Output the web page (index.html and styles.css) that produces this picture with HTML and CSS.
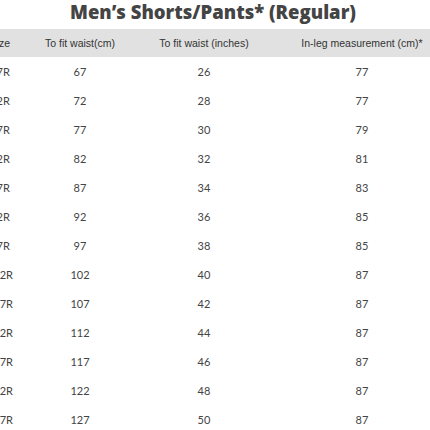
FILE: index.html
```html
<!DOCTYPE html>
<html>
<head>
<meta charset="utf-8">
<link rel="stylesheet" href="styles.css">
</head>
<body>
<div class="page">
  <h1 class="title">Men’s Shorts/Pants* (Regular)</h1>
  <div class="table">
    <div class="row head">
      <div class="cell">Size</div>
      <div class="cell">To fit waist(cm)</div>
      <div class="cell">To fit waist (inches)</div>
      <div class="cell">In-leg measurement (cm)*</div>
    </div>
    <div class="row"><div class="cell">67R</div><div class="cell">67</div><div class="cell">26</div><div class="cell">77</div></div>
    <div class="row"><div class="cell">72R</div><div class="cell">72</div><div class="cell">28</div><div class="cell">77</div></div>
    <div class="row"><div class="cell">77R</div><div class="cell">77</div><div class="cell">30</div><div class="cell">79</div></div>
    <div class="row"><div class="cell">82R</div><div class="cell">82</div><div class="cell">32</div><div class="cell">81</div></div>
    <div class="row"><div class="cell">87R</div><div class="cell">87</div><div class="cell">34</div><div class="cell">83</div></div>
    <div class="row"><div class="cell">92R</div><div class="cell">92</div><div class="cell">36</div><div class="cell">85</div></div>
    <div class="row"><div class="cell">97R</div><div class="cell">97</div><div class="cell">38</div><div class="cell">85</div></div>
    <div class="row"><div class="cell">102R</div><div class="cell">102</div><div class="cell">40</div><div class="cell">87</div></div>
    <div class="row"><div class="cell">107R</div><div class="cell">107</div><div class="cell">42</div><div class="cell">87</div></div>
    <div class="row"><div class="cell">112R</div><div class="cell">112</div><div class="cell">44</div><div class="cell">87</div></div>
    <div class="row"><div class="cell">117R</div><div class="cell">117</div><div class="cell">46</div><div class="cell">87</div></div>
    <div class="row"><div class="cell">122R</div><div class="cell">122</div><div class="cell">48</div><div class="cell">87</div></div>
    <div class="row"><div class="cell">127R</div><div class="cell">127</div><div class="cell">50</div><div class="cell">87</div></div>
  </div>
</div>
</body>
</html>
```
FILE: styles.css
```css
html, body {
  margin: 0;
  padding: 0;
  background: #fff;
  overflow: hidden;
}
.page {
  width: 430px;
  height: 430px;
  overflow: hidden;
}
.title {
  margin: 0;
  height: 29px;
  line-height: 23px;
  text-align: center;
  font-family: "Open Sans", sans-serif;
  font-weight: 800;
  font-size: 18.5px;
  color: #444;
  padding-right: 4px;
}
.table {
  margin-left: -40px;
  width: 476px;
}
.row {
  display: grid;
  grid-template-columns: 80px 80px 168px 148px;
  height: 29px;
  align-items: center;
  text-align: center;
  font-family: "Lato", sans-serif;
  font-size: 11px;
  color: #444;
}
.row.head {
  height: 28px;
  background: #e1e1e1;
  font-family: "Liberation Sans", Arial, sans-serif;
  font-size: 10.5px;
  color: #333;
}
.cell {
  white-space: nowrap;
}
```
